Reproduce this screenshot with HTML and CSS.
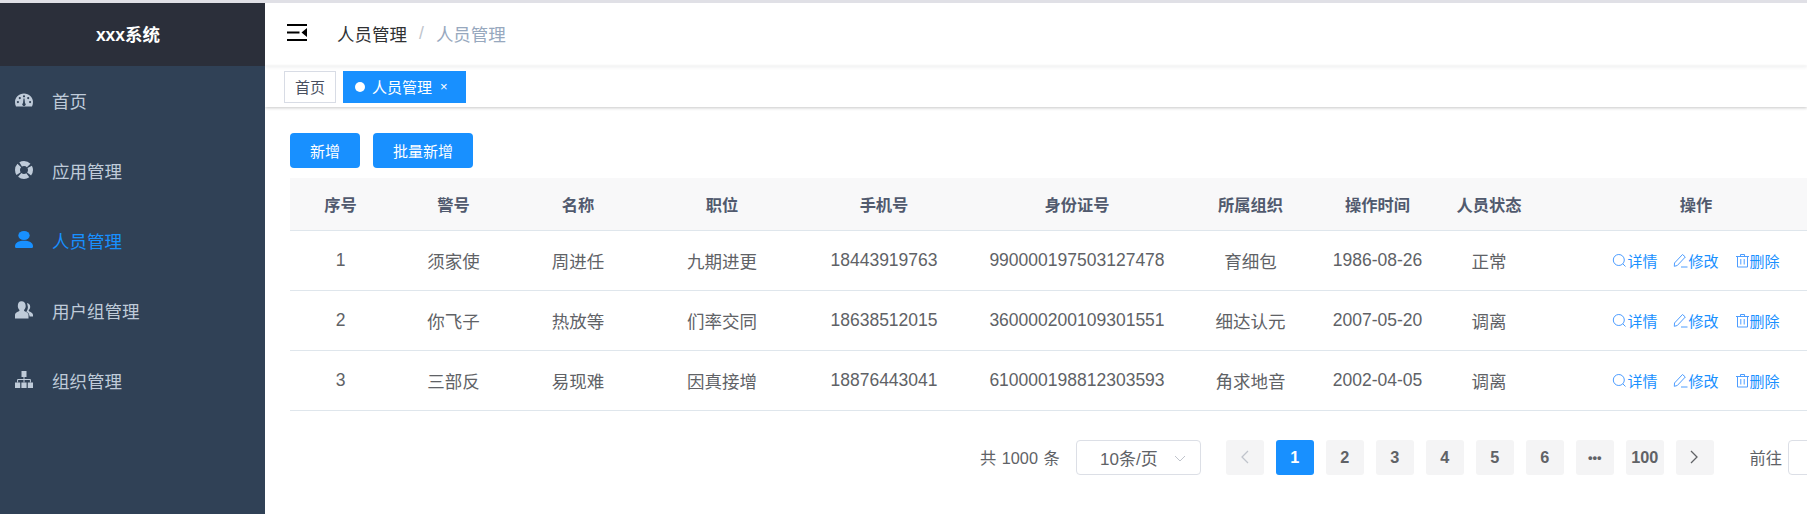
FILE: index.html
```html
<!DOCTYPE html>
<html lang="zh">
<head>
<meta charset="utf-8">
<title>xxx系统</title>
<link rel="stylesheet" href="styles.css">
</head>
<body>
<div class="topline"></div>
<div class="app">
  <aside class="sidebar">
    <div class="logo">xxx系统</div>
    <nav class="menu">
      <a class="menu-item"><svg class="menu-icon" viewBox="0 0 18 18"><path fill="currentColor" fill-rule="evenodd" d="M9 2.500c-5 0-9 3.800-9 8.500 0 1.700.4 3.200 1 4.500h16c.6-1.300 1-2.800 1-4.500 0-4.700-4-8.500-9-8.500zM9 4.200a1.100 1.100 0 1 1 0 2.200 1.100 1.100 0 0 1 0-2.200zM4.800 6a1.100 1.100 0 1 1 0 2.200 1.100 1.100 0 0 1 0-2.200zm8.400 0a1.100 1.100 0 1 1 0 2.200 1.100 1.100 0 0 1 0-2.200zM2.900 10a1.100 1.100 0 1 1 0 2.200 1.100 1.100 0 0 1 0-2.200zm12.200 0a1.100 1.100 0 1 1 0 2.200 1.100 1.100 0 0 1 0-2.200zM8.500 7.500h1l.5 4.400a1.700 1.700 0 1 1-2 0z"/></svg><span>首页</span></a>
      <a class="menu-item"><svg class="menu-icon" viewBox="0 0 18 18"><circle class="ring" cx="9" cy="9" r="6.500"/></svg><span>应用管理</span></a>
      <a class="menu-item active"><svg class="menu-icon" viewBox="0 0 18 18"><ellipse fill="currentColor" cx="9" cy="4.500" rx="5.700" ry="4.500"/><path fill="currentColor" d="M0 15.500C0 11.500 4 9.800 9 9.800s9 1.700 9 5.700c0 1-.8 1.500-1.700 1.500H1.700C.8 17 0 16.500 0 15.500z"/></svg><span>人员管理</span></a>
      <a class="menu-item"><svg class="menu-icon" viewBox="0 0 18 18"><path fill="currentColor" d="M6.500.300c2.500 0 4.200 2 4.200 4.600 0 1.700-.7 3.200-1.700 4.100 0 1 .6 1.300 1.800 1.800 1.900.7 2.700 2 2.700 3.200v3.500H0V14c0-1.200.8-2.500 2.700-3.200C3.900 10.300 4.500 10 4.500 9c-1-.9-1.700-2.400-1.700-4.100C2.800 2.300 4 .3 6.500.300zM12 2c1.900.2 3.200 1.800 3.200 3.700 0 1.500-.6 2.700-1.500 3.500 0 .8.500 1.100 1.400 1.600 1.800.9 2.900 2.100 2.900 3.200v1.500h-3.400c-.2-2.400-1.200-3.800-3.200-4.800.9-1.300 1.500-2.900 1.500-4.600C12.400 3.800 12.300 2.900 12 2z"/></svg><span>用户组管理</span></a>
      <a class="menu-item"><svg class="menu-icon" viewBox="0 0 18 18"><path fill="currentColor" d="M6.500 0h5v6h-5zM0 11.500h5.200V17H0zM6.400 11.500h5.200V17H6.400zM12.800 11.500H18V17h-5.200z"/><path fill="none" stroke="currentColor" d="M9 6v5.500M2.600 11.500V8.500h12.800v3"/></svg><span>组织管理</span></a>
    </nav>
  </aside>
  <main class="main">
    <header class="navbar">
      <svg class="hamburger" viewBox="0 0 20 17"><path fill="#000" d="M0 0h20v2H0zM0 7.500h12.500v2H0zM0 15h20v2H0zM20 4v9L14.500 8.500z"/></svg>
      <div class="crumbs"><span class="crumb">人员管理</span><span class="sep">/</span><span class="crumb muted">人员管理</span></div>
    </header>
    <div class="tags">
      <span class="tag">首页</span>
      <span class="tag tag-active"><i class="dot"></i>人员管理<i class="close">×</i></span>
    </div>
    <section class="content">
      <div class="actions">
        <button class="btn">新增</button>
        <button class="btn btn-wide">批量新增</button>
      </div>
      <table class="table">
        <colgroup>
          <col class="c-index"><col class="c-badge"><col class="c-name"><col class="c-job"><col class="c-phone"><col class="c-id"><col class="c-org"><col class="c-time"><col class="c-state"><col class="c-op">
        </colgroup>
        <thead>
          <tr><th>序号</th><th>警号</th><th>名称</th><th>职位</th><th>手机号</th><th>身份证号</th><th>所属组织</th><th>操作时间</th><th>人员状态</th><th>操作</th></tr>
        </thead>
        <tbody>
          <tr><td>1</td><td>须家使</td><td>周进任</td><td>九期进更</td><td>18443919763</td><td>990000197503127478</td><td>育细包</td><td>1986-08-26</td><td>正常</td><td><span class="op-row">
            <a class="op"><svg viewBox="0 0 15 15"><path d="M6.800 1.500a5.500 5.500 0 1 0 0 11 5.500 5.500 0 0 0 0-11zM10.800 10.800l2.700 2.700"/></svg>详情</a>
            <a class="op"><svg viewBox="0 0 15 15"><path d="M1.500 10 9.500 1.500l2.800 2.500-8 8.500-3 .8zM8 14h6.500"/></svg>修改</a>
            <a class="op"><svg viewBox="0 0 15 15"><path d="M1 3.500h13M5.500 3.500v-2h4v2M2.500 3.500v10.500h10V3.500M5.800 6v5.500M9.200 6v5.500"/></svg>删除</a></span></td></tr>
          <tr><td>2</td><td>你飞子</td><td>热放等</td><td>们率交同</td><td>18638512015</td><td>360000200109301551</td><td>细达认元</td><td>2007-05-20</td><td>调离</td><td><span class="op-row">
            <a class="op"><svg viewBox="0 0 15 15"><path d="M6.800 1.500a5.500 5.500 0 1 0 0 11 5.500 5.500 0 0 0 0-11zM10.800 10.800l2.700 2.700"/></svg>详情</a>
            <a class="op"><svg viewBox="0 0 15 15"><path d="M1.500 10 9.500 1.500l2.800 2.500-8 8.500-3 .8zM8 14h6.500"/></svg>修改</a>
            <a class="op"><svg viewBox="0 0 15 15"><path d="M1 3.500h13M5.500 3.500v-2h4v2M2.500 3.500v10.500h10V3.500M5.800 6v5.500M9.200 6v5.500"/></svg>删除</a></span></td></tr>
          <tr><td>3</td><td>三部反</td><td>易现难</td><td>因真接增</td><td>18876443041</td><td>610000198812303593</td><td>角求地音</td><td>2002-04-05</td><td>调离</td><td><span class="op-row">
            <a class="op"><svg viewBox="0 0 15 15"><path d="M6.800 1.500a5.500 5.500 0 1 0 0 11 5.500 5.500 0 0 0 0-11zM10.800 10.800l2.700 2.700"/></svg>详情</a>
            <a class="op"><svg viewBox="0 0 15 15"><path d="M1.500 10 9.500 1.500l2.800 2.500-8 8.500-3 .8zM8 14h6.500"/></svg>修改</a>
            <a class="op"><svg viewBox="0 0 15 15"><path d="M1 3.500h13M5.500 3.500v-2h4v2M2.500 3.500v10.500h10V3.500M5.800 6v5.500M9.200 6v5.500"/></svg>删除</a></span></td></tr>
        </tbody>
      </table>
      <div class="pagination">
        <span class="total">共 1000 条</span>
        <span class="select">10条/页<svg viewBox="0 0 12 7"><path d="M1 1l5 5 5-5"/></svg></span>
        <div class="pager">
          <span class="page disabled"><svg viewBox="0 0 9 14"><path d="M8 1 2 7l6 6"/></svg></span>
          <span class="page current">1</span>
          <span class="page">2</span>
          <span class="page">3</span>
          <span class="page">4</span>
          <span class="page">5</span>
          <span class="page">6</span>
          <span class="page dots">•••</span>
          <span class="page">100</span>
          <span class="page"><svg viewBox="0 0 9 14"><path d="M1 1l6 6-6 6"/></svg></span>
        </div>
        <span class="goto">前往</span>
        <span class="goto-input"></span>
      </div>
    </section>
  </main>
</div>
</body>
</html>
```
FILE: styles.css
```css
* { box-sizing: border-box; }
html, body { margin: 0; height: 100%; overflow: hidden; background: #fff; }
body {
  font-family: "Liberation Sans", "Noto Sans CJK SC", sans-serif;
  font-size: 17.5px;
  color: #606266;
  display: flex;
  flex-direction: column;
}
.topline { height: 3px; background: #e0e0e6; flex: none; }
.app { flex: 1; display: flex; min-height: 0; }

.sidebar { width: 265px; flex: none; background: #304156; }
.logo {
  height: 63px;
  background: #2b2f3a;
  color: #fff;
  font-weight: 700;
  font-size: 17.5px;
  display: flex;
  align-items: center;
  justify-content: center;
  padding: 0 9px 3px 0;
}
.menu-item {
  height: 70px;
  display: flex;
  align-items: center;
  padding: 0 0 2px 15px;
  color: #bfcbd9;
}
.menu-item.active { color: #1890ff; }
.menu-icon { width: 18px; height: 18px; margin-right: 19px; flex: none; }
.ring { fill: none; stroke: currentColor; stroke-width: 5; stroke-dasharray: 8.6 1.61; stroke-dashoffset: 4.3; }

.main { flex: 1; min-width: 0; overflow: hidden; }
.navbar {
  height: 63px;
  display: flex;
  align-items: center;
  padding-left: 22px;
  box-shadow: 0 1px 4px rgba(0, 21, 41, .08);
  position: relative;
}
.hamburger { width: 20px; height: 17px; margin: 0 30px 4px 0; }
.crumbs { display: flex; align-items: center; color: #303133; margin-bottom: 2px; }
.sep { color: #c0c4cc; margin: 0 12px; }
.muted { color: #97a8be; }

.tags {
  height: 41px;
  display: flex;
  align-items: center;
  gap: 7px;
  padding-left: 19px;
  box-shadow: 0 1px 3px 0 rgba(0, 0, 0, .22);
  font-size: 15px;
}
.tag {
  height: 32px;
  display: flex;
  align-items: center;
  padding: 0 10px;
  border: 1px solid #d8dce5;
  color: #495060;
}
.tag-active { background: #1890ff; border-color: #1890ff; color: #fff; padding: 0 17px 0 11px; }
.dot { width: 10px; height: 10px; border-radius: 50%; background: #fff; margin-right: 7px; }
.close { font-style: normal; font-size: 13px; margin-left: 8px; }

.content { padding: 26px 0 0 25px; width: 1600px; }
.actions { display: flex; gap: 13px; margin-bottom: 10px; }
.btn {
  width: 70px;
  height: 35px;
  border: 0;
  border-radius: 4px;
  background: #1890ff;
  color: #fff;
  font: inherit;
  font-size: 15px;
  padding: 0;
}
.btn-wide { width: 100px; }

.table { border-collapse: collapse; table-layout: fixed; width: 1568px; }
.c-index { width: 101px; }
.c-badge { width: 125px; }
.c-name { width: 124px; }
.c-job { width: 164px; }
.c-phone { width: 160px; }
.c-id { width: 226px; }
.c-org { width: 121px; }
.c-time { width: 133px; }
.c-state { width: 90px; }
.c-op { width: 324px; }
th, td { padding: 0; text-align: center; font-size: 17.5px; font-weight: 400; }
th { height: 52px; background: #f8f8f9; color: #515a6e; font-size: 16.25px; font-weight: 700; border-bottom: 1px solid #dfe6ec; }
td { height: 60px; border-bottom: 1px solid #dfe6ec; }
.op-row { display: flex; gap: 16px; justify-content: center; }
.op { display: flex; align-items: center; color: #1890ff; font-size: 15px; }
.op svg { width: 15px; height: 15px; fill: none; stroke: #4d9dff; stroke-width: 1; }

.pagination { display: flex; align-items: center; height: 35px; margin-top: 29px; padding-left: 690px; white-space: nowrap; font-size: 16.25px; }
.total { width: 78px; margin-right: 18px; word-spacing: 1px; }
.select {
  width: 125px;
  height: 35px;
  border: 1px solid #dcdfe6;
  border-radius: 4px;
  display: flex;
  align-items: center;
  padding-left: 23px;
  position: relative;
  font-size: 17px;
}
.select svg { position: absolute; right: 14px; top: 14px; width: 12px; height: 7px; fill: none; stroke: #c0c4cc; stroke-width: 1; }
.pager { display: flex; gap: 12.500px; margin-left: 25px; }
.page {
  width: 37.500px;
  height: 35px;
  border-radius: 3px;
  background: #f4f4f5;
  color: #606266;
  font-weight: 700;
  font-size: 16.250px;
  display: flex;
  align-items: center;
  justify-content: center;
}
.page svg { width: 9px; height: 14px; fill: none; stroke: currentColor; stroke-width: 1.300; }
.page.disabled { color: #c0c4cc; }
.page.current { background: #1890ff; color: #fff; }
.page.dots { font-size: 13px; }
.goto { margin-left: 36px; margin-right: 6px; }
.goto-input { width: 60px; height: 35px; border: 1px solid #dcdfe6; border-radius: 4px; flex: none; }
```
